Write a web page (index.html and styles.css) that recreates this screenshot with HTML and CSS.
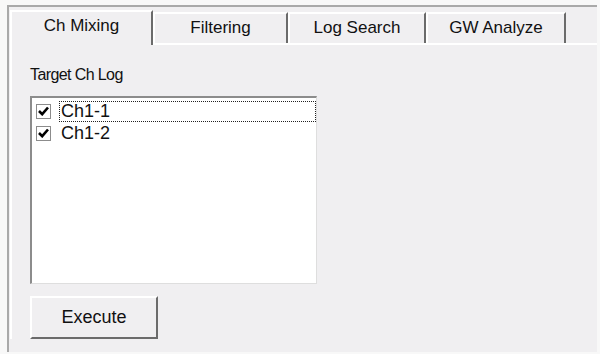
FILE: index.html
```html
<!DOCTYPE html>
<html lang="en">
<head>
    <meta charset="UTF-8">
    <title>Ch Mixing</title>
    <link rel="stylesheet" href="styles.css">
</head>
<body>
    <div class="frame">
        <!-- Tab strip -->
        <div class="tabs">
            <div class="tab active">Ch Mixing</div>
            <div class="tab">Filtering</div>
            <div class="tab">Log Search</div>
            <div class="tab">GW Analyze</div>
        </div>

        <!-- Tab page -->
        <div class="panel">
            <div class="label">Target Ch Log</div>
            <div class="listbox">
                <div class="item">
                    <span class="check">
                        <svg width="11" height="10" viewBox="0 0 11 10"><path d="M1 5 L4.2 8.2 L10 1.5" fill="none" stroke="#000" stroke-width="2.6"/></svg>
                    </span>
                    <span class="item-text focused">Ch1-1</span>
                </div>
                <div class="item">
                    <span class="check">
                        <svg width="11" height="10" viewBox="0 0 11 10"><path d="M1 5 L4.2 8.2 L10 1.5" fill="none" stroke="#000" stroke-width="2.6"/></svg>
                    </span>
                    <span class="item-text">Ch1-2</span>
                </div>
            </div>
            <button class="btn">Execute</button>
        </div>
    </div>
</body>
</html>
```

FILE: styles.css
```css
* {
    margin: 0;
    padding: 0;
    box-sizing: border-box;
    font-family: 'Liberation Sans', Arial, sans-serif;
}

body {
    background: #f8f8f8;
    width: 600px;
    height: 354px;
    overflow: hidden;
}

.frame {
    margin: 5px 0 0 7px;
    width: 590px;
    height: 347px;
    background: #f0eff1;
    border-top: 2px solid #a9a9a9;
    border-left: 2px solid #a9a9a9;
    padding-left: 1px;
}

.tabs {
    display: flex;
    align-items: flex-end;
    height: 36px;
}

.tab {
    height: 31px;
    border-top: 2px solid #ffffff;
    border-left: 2px solid #ffffff;
    border-right: 2px solid #6b6b6b;
    font-size: 17px;
    color: #111;
    display: flex;
    justify-content: center;
    align-items: center;
    padding-bottom: 2px;
}

.tab:nth-child(2) {
    width: 135px;
}

.tab:nth-child(3) {
    width: 138px;
}

.tab:nth-child(4) {
    width: 140px;
}

.tab.active {
    width: 143px;
    height: 35px;
    padding-bottom: 5px;
    margin-bottom: -2px;
    background: #f0eff1;
    position: relative;
    z-index: 1;
}

.panel {
    border-top: 2px solid #ffffff;
    border-left: 2px solid #ffffff;
    padding: 20px 0 0 18px;
}

.label {
    font-size: 16px;
    letter-spacing: -0.6px;
    line-height: 19px;
    color: #111;
}

.listbox {
    margin-top: 12px;
    width: 287px;
    height: 188px;
    background: #fff;
    border-top: 2px solid #8c8c8c;
    border-left: 2px solid #8c8c8c;
    border-right: 1px solid #dedede;
    border-bottom: 1px solid #dedede;
    padding: 2px 0 0 4px;
}

.item {
    display: flex;
    align-items: center;
    height: 22px;
}

.check {
    width: 15px;
    height: 15px;
    border: 1px solid #8c8c8c;
    background: #fff;
    display: flex;
    justify-content: center;
    align-items: center;
    margin-right: 8px;
    flex-shrink: 0;
}

.item-text {
    flex: 1;
    font-size: 18px;
    line-height: 19px;
    color: #111;
    padding-left: 1px;
    border: 1px dotted transparent;
}

.item-text.focused {
    border-color: #222;
}

.btn {
    margin-top: 12px;
    width: 128px;
    height: 43px;
    background: #f0eff1;
    border-top: 2px solid #ffffff;
    border-left: 2px solid #ffffff;
    border-right: 2px solid #6b6b6b;
    border-bottom: 2px solid #6b6b6b;
    font-size: 18px;
    color: #111;
}
```
